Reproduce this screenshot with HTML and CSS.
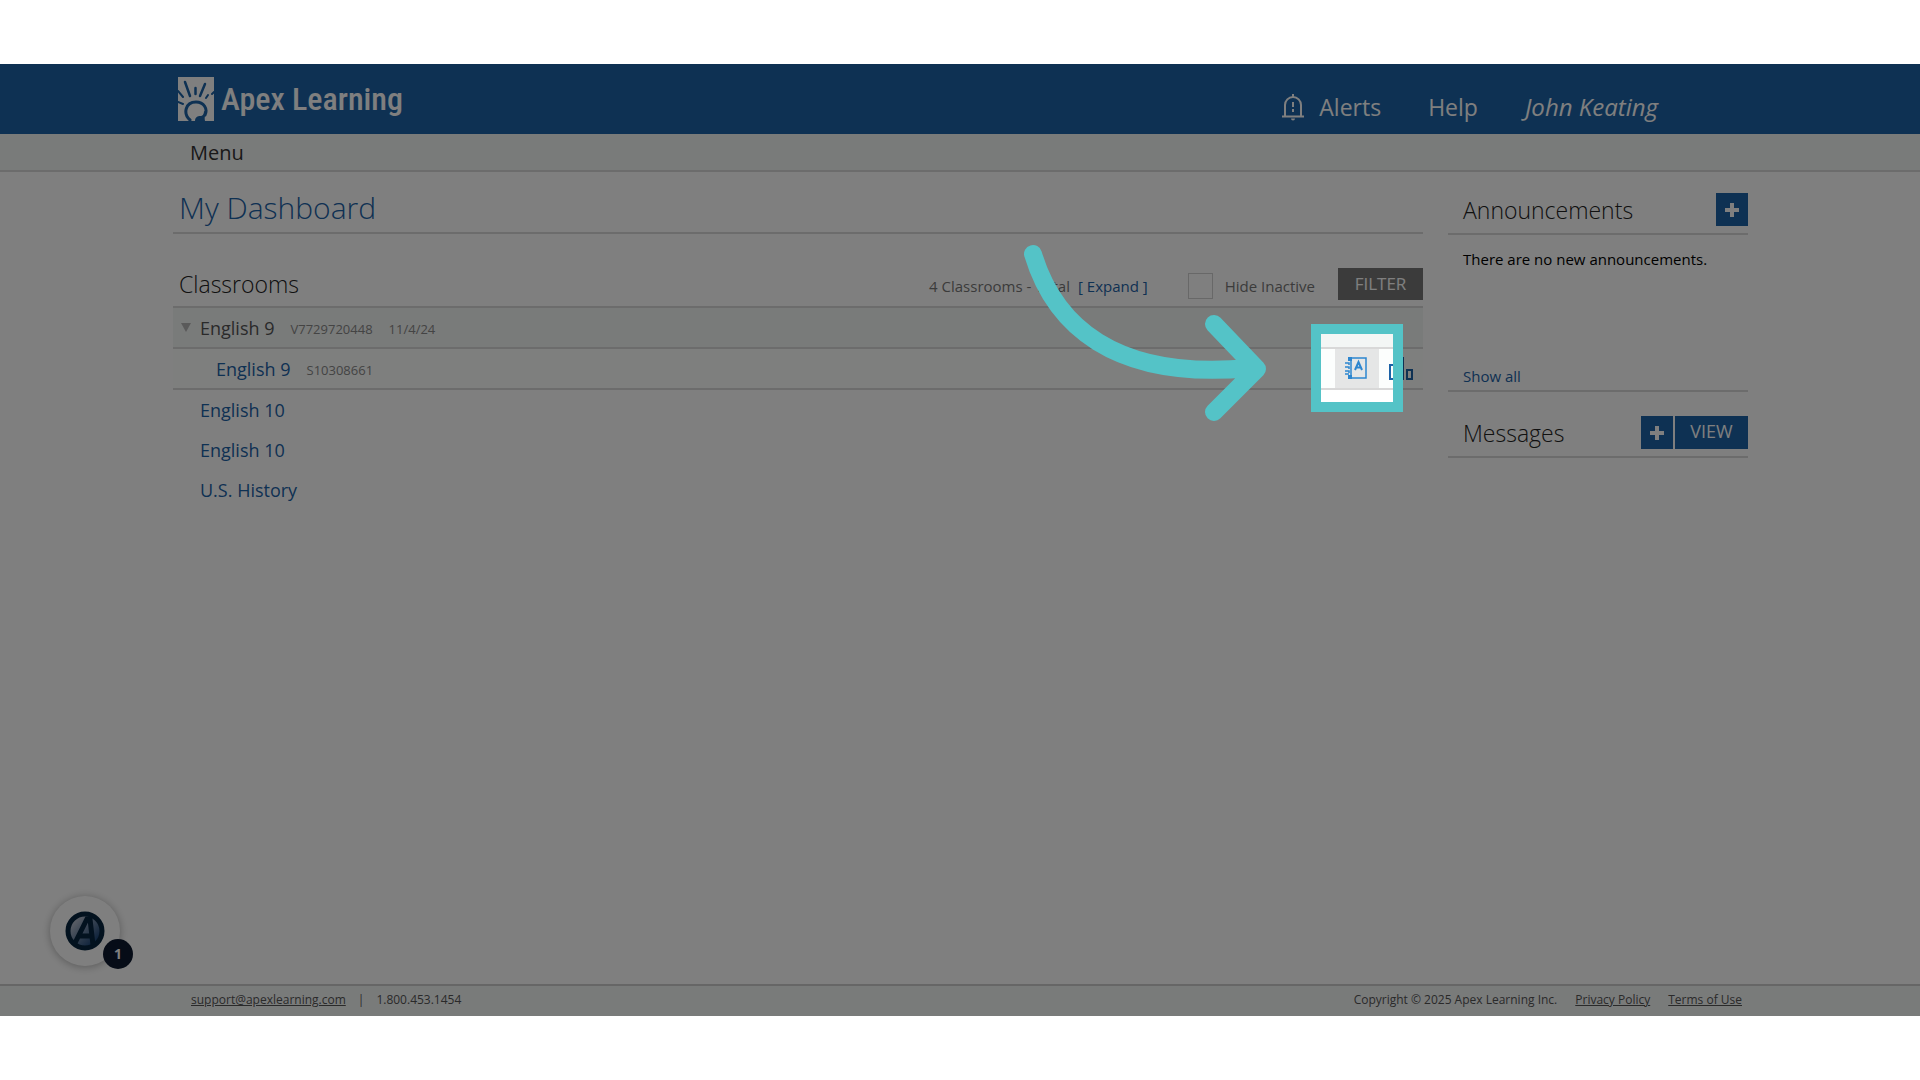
FILE: index.html
```
<!DOCTYPE html>
<html lang="en">
<head>
    <meta charset="UTF-8">
    <meta name="viewport" content="width=device-width, initial-scale=1.0">
    <title>My Dashboard - Apex Learning</title>
    <link rel="stylesheet" href="styles.css">
</head>
<body>
    <div class="app">
        <header class="header">
            <a class="logo" href="#">
                <svg class="logo-mark" viewBox="0 0 36 44" aria-hidden="true">
                    <path fill="#fff" d="M0 0h36v44H0z"/>
                    <g fill="none" stroke="#1c62a6" stroke-linecap="round">
                        <path stroke-width="2.500" d="M7 5l5 14M17.500 11v6M27 7l-5 12"/>
                        <path stroke-width="2" d="M0 14l5 6M0 25l5 2M30 18l-2 3M36 15l-2 2"/>
                        <path stroke-width="3" d="M12 43c-7-6-5-18 6-18 8 0 12 7 9 13"/>
                    </g>
                    <path fill="#1c62a6" d="M17 44c0-4 3-5 5-5 3 0 4-2 4-5l2 1c0 3-2 4-1 9z"/>
                </svg>
                <span class="logo-text">Apex Learning</span>
            </a>
            <nav class="top-nav">
                <a class="alerts" href="#">
                    <svg class="bell" viewBox="0 0 22 27" fill="none" stroke="#fff" stroke-width="2" aria-hidden="true">
                        <path d="M0 22.500h22M3 22V11a8 8 0 0 1 16 0v11M11 3V0M11 8v5M11 15v3"/>
                        <path fill="#fff" stroke="none" d="M9 24.500h4a2 2 0 0 1-4 0z"/>
                    </svg>
                    Alerts
                </a>
                <a href="#">Help</a>
                <a class="user" href="#">John Keating</a>
            </nav>
        </header>
        <nav class="menu-bar">
            <button class="menu" type="button">Menu</button>
        </nav>

        <div class="page">
            <main class="main">
                <h1>My Dashboard</h1>
                <div class="toolbar">
                    <h2>Classrooms</h2>
                    <div class="options">
                        <span>4 Classrooms - Total</span>
                        <a class="expand" href="#">[ Expand ]</a>
                        <input class="inactive-box" type="checkbox" id="inactive">
                        <label for="inactive">Hide Inactive</label>
                    </div>
                    <button class="filter" type="button">FILTER</button>
                </div>
                <ul class="classrooms">
                    <li class="row group">
                        <button class="toggle" type="button" aria-label="Collapse English 9"></button>
                        <span>English 9</span>
                        <small>V7729720448</small>
                        <small>11/4/24</small>
                    </li>
                    <li class="row section">
                        <a href="#">English 9</a>
                        <small>S10308661</small>
                        <div class="actions">
                            <a class="action active" href="#" aria-label="Gradebook">
                                <svg viewBox="0 0 24 24" width="24" height="24" fill="none" stroke="#2d86cf" aria-hidden="true">
                                    <path stroke-width="1.500" d="M6 1h15v20H3M6 1v20"/>
                                    <path fill="#2d86cf" stroke="none" d="M3 0h4v4H3zM3 18h4v4H3z"/>
                                    <path stroke-width="1.500" d="M0 6h4v2M0 10h4v2M0 14h4v2M0 17h4"/>
                                    <path stroke-width="2" d="M10 13l3.500-8L17 13M11.500 10.500h4"/>
                                </svg>
                            </a>
                            <a class="action" href="#" aria-label="Reports">
                                <svg viewBox="0 0 24 24" width="24" height="24" fill="none" stroke="#1c62a6" stroke-width="2" aria-hidden="true">
                                    <path d="M1 8h5v14H1zM9 1h5v21H9zM18 13h5v9h-5z"/>
                                </svg>
                            </a>
                            <div class="spotlight"></div>
                            <svg class="pointer" viewBox="0 0 260 190" aria-hidden="true">
                                <path d="M13 14C34 84 93 141 230 128M194 84l43 45-43 43"/>
                            </svg>
                        </div>
                    </li>
                    <li class="row"><a href="#">English 10</a></li>
                    <li class="row"><a href="#">English 10</a></li>
                    <li class="row"><a href="#">U.S. History</a></li>
                </ul>
            </main>

            <aside class="sidebar">
                <div class="side-head">
                    <h2>Announcements</h2>
                    <button class="btn plus" type="button" aria-label="Add announcement"></button>
                </div>
                <div class="side-body">
                    <p>There are no new announcements.</p>
                    <a href="#">Show all</a>
                </div>
                <div class="side-head messages">
                    <h2>Messages</h2>
                    <button class="btn plus" type="button" aria-label="New message"></button>
                    <button class="btn view" type="button">VIEW</button>
                </div>
            </aside>
        </div>

        <footer class="footer">
            <a href="#">support@apexlearning.com</a>
            <span class="bar">|</span>
            <span>1.800.453.1454</span>
            <span class="copyright">Copyright © 2025 Apex Learning Inc.</span>
            <a href="#">Privacy Policy</a>
            <a class="terms" href="#">Terms of Use</a>
        </footer>

        <button class="guide" type="button">
            <svg viewBox="0 0 40 40" width="40" height="40" aria-hidden="true">
                <defs>
                    <linearGradient id="disc" x2="1" y2="1">
                        <stop offset="0.200" stop-color="#b4bccb"/>
                        <stop offset="0.800" stop-color="#1d4677"/>
                    </linearGradient>
                </defs>
                <circle cx="20" cy="20" r="17" fill="url(#disc)" stroke="#06243e" stroke-width="5"/>
                <path fill="none" stroke="#06243e" stroke-width="5" d="M9 34L22 8h3l3 26M15 25h12"/>
            </svg>
            <span class="guide-count">1</span>
        </button>
    </div>
</body>
</html>
```
FILE: styles.css
```
* { box-sizing: border-box; }
body {
    margin: 0;
    padding: 64px 0;
    font-family: 'Open Sans', sans-serif;
    font-size: 15px;
    line-height: 20px;
    color: #000;
    background: #fff;
}
h1, h2, p, ul { margin: 0; padding: 0; }
a {
    color: #1c62a6;
    text-decoration: none;
}
button {
    padding: 0;
    border: 0;
    font-family: inherit;
    cursor: pointer;
}
h1 {
    padding: 16px 6px 4px;
    border-bottom: 2px solid #d8d8d8;
    font-size: 30px;
    font-weight: 300;
    line-height: 40px;
    color: #1c62a6;
}
h2 {
    font-size: 23px;
    font-weight: 300;
    line-height: 28px;
    color: #222;
}
.app {
    position: relative;
    display: flex;
    flex-direction: column;
    min-height: calc(100vh - 128px);
    overflow: hidden;
}

/* header */
.header {
    display: flex;
    justify-content: space-between;
    align-items: center;
    height: 70px;
    padding: 0 262px 0 178px;
    background: #1c62a6;
}
.logo {
    display: flex;
    align-items: center;
    gap: 7px;
    color: #fff;
}
.logo-mark {
    width: 36px;
    height: 44px;
}
.logo-text {
    font-family: 'Roboto Condensed', 'Open Sans', sans-serif;
    font-size: 32px;
    font-weight: 500;
    line-height: 44px;
}
.top-nav {
    display: flex;
    align-items: center;
    gap: 47px;
    padding-top: 16px;
    font-size: 23px;
    line-height: 32px;
}
.top-nav a { color: #fff; }
.alerts {
    display: flex;
    align-items: center;
    gap: 15px;
}
.bell {
    width: 22px;
    height: 27px;
}
.top-nav .user {
    font-size: 24px;
    font-style: italic;
}
.menu-bar {
    display: flex;
    height: 38px;
    padding: 0 190px;
    border-bottom: 2px solid #d8d8d8;
    background: #f3f6f5;
}
.menu {
    background: none;
    font-size: 20px;
    color: #333;
}

/* content */
.page {
    flex: 1;
    display: flex;
    gap: 25px;
    padding: 0 172px 0 173px;
}
.main { flex: 1; }
.toolbar {
    display: flex;
    align-items: center;
    padding: 34px 0 6px 6px;
    border-bottom: 2px solid #d8d8d8;
    color: #777;
}
.toolbar h2 { margin-right: auto; }
.options {
    display: flex;
    align-items: center;
    padding-top: 4px;
}
.expand { margin-left: 8px; }
.inactive-box {
    appearance: none;
    width: 25px;
    height: 26px;
    margin: 0 12px 0 40px;
    border: 1px solid #d0d0d0;
    background: #fff;
}
.filter {
    width: 85px;
    height: 32px;
    margin-left: 23px;
    padding-bottom: 2px;
    background: #777;
    font-size: 17px;
    color: #fff;
}
.classrooms { list-style: none; }
.row {
    display: flex;
    align-items: center;
    height: 40px;
    padding-left: 27px;
    font-size: 18px;
}
.row small {
    margin-left: 16px;
    padding-top: 2px;
    font-size: 13px;
    color: #888;
}
.group, .section {
    height: 41px;
    border-bottom: 2px solid #d8d8d8;
}
.group {
    padding-left: 8px;
    background: #f3f6f5;
    color: #555;
}
.section {
    padding-left: 43px;
    background: #fcfefd;
}
.toggle {
    margin-right: 9px;
    border: 5px solid transparent;
    border-top: 9px solid #b4b4b4;
    border-bottom: 0;
    background: none;
}
.actions {
    position: relative;
    display: flex;
    align-self: stretch;
    margin-left: auto;
}
.action {
    display: flex;
    justify-content: center;
    align-items: center;
    width: 44px;
}
.active { background: #e5e6e6; }

/* sidebar */
.sidebar { width: 300px; }
.side-head {
    display: flex;
    align-items: center;
    gap: 2px;
    padding: 21px 0 7px 15px;
    border-bottom: 2px solid #d8d8d8;
}
.side-head h2 { margin-right: auto; }
.messages { padding-top: 24px; }
.side-body {
    display: flex;
    flex-direction: column;
    justify-content: space-between;
    min-height: 157px;
    padding: 14px 15px 4px;
    border-bottom: 2px solid #d8d8d8;
}
.btn {
    height: 33px;
    padding-bottom: 3px;
    background: #1c62a6;
    font-size: 18px;
    color: #fff;
}
.plus {
    width: 32px;
    background: linear-gradient(#fff, #fff) center / 14px 4px no-repeat,
                linear-gradient(#fff, #fff) center / 4px 14px no-repeat,
                #1c62a6;
}
.view { width: 73px; }

/* footer */
.footer {
    display: flex;
    align-items: center;
    height: 32px;
    padding: 0 178px 2px 191px;
    border-top: 2px solid #ccc;
    background: #f3f6f5;
    font-size: 12px;
    color: #555;
}
.footer a {
    color: #555;
    text-decoration: underline;
}
.bar { margin: 0 12px; }
.copyright { margin: 0 18px 0 auto; }
.terms { margin-left: 18px; }

/* floating guide button */
.guide {
    position: absolute;
    left: 50px;
    bottom: 50px;
    display: flex;
    justify-content: center;
    align-items: center;
    width: 70px;
    height: 70px;
    border-radius: 50%;
    background: #fff;
    box-shadow: 0 1px 8px rgba(0, 0, 0, 0.3);
}
.guide-count {
    position: absolute;
    right: -13px;
    bottom: -3px;
    width: 30px;
    height: 30px;
    border-radius: 50%;
    background: #0c182e;
    font-size: 14px;
    font-weight: 700;
    line-height: 30px;
    color: #fff;
}

/* tutorial overlay, the shadow dims everything outside the box */
.spotlight {
    position: absolute;
    z-index: 10;
    left: -24px;
    top: -25px;
    width: 92px;
    height: 88px;
    border: 10px solid #54c3c7;
    box-shadow: 0 0 0 3000px rgba(0, 0, 0, 0.5);
    pointer-events: none;
}
.pointer {
    position: absolute;
    z-index: 11;
    right: 143px;
    top: -109px;
    width: 260px;
    height: 190px;
    fill: none;
    stroke: #54c3c7;
    stroke-width: 18px;
    stroke-linecap: round;
    stroke-linejoin: round;
    pointer-events: none;
}
```
